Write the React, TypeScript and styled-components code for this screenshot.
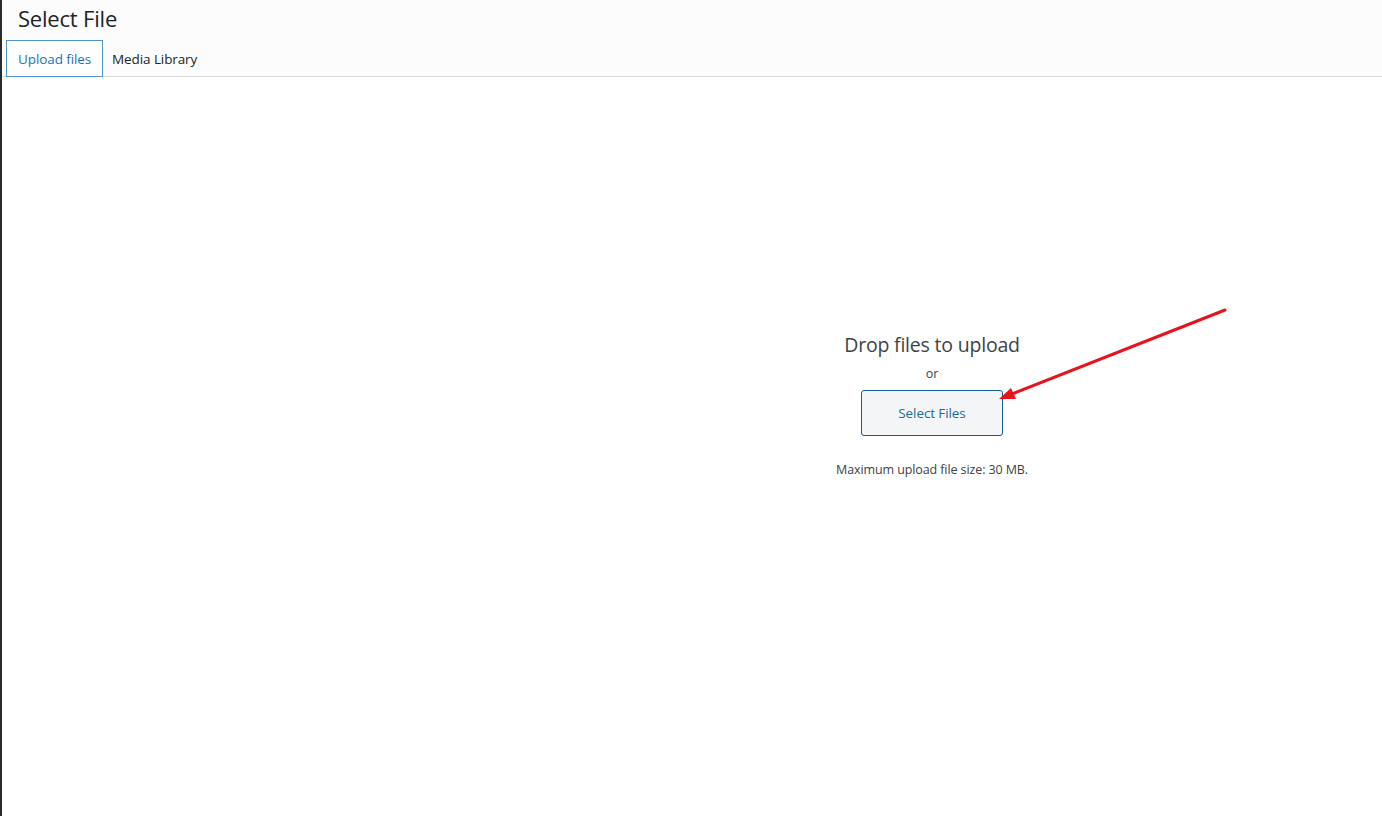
import React, { ReactElement } from 'react';
import styled, { createGlobalStyle } from 'styled-components';

const GlobalStyle = createGlobalStyle`
  html, body {
    margin: 0;
    padding: 0;
    background: #fff;
  }
  body {
    font-family: 'Open Sans', 'Noto Sans', sans-serif;
    color: #1d2327;
  }
`;

const Frame = styled.div`
  position: relative;
  display: flex;
  height: 816px;
  width: 1382px;
  overflow: hidden;
  background: #fff;
`;

const EdgeStrip = styled.div`
  width: 2px;
  flex-shrink: 0;
  background: #2b2b2b;
`;

const Modal = styled.div`
  flex: 1;
  display: flex;
  flex-direction: column;
`;

const Header = styled.div`
  display: flex;
  flex-direction: column;
  background: #fcfcfc;
  border-bottom: 1px solid #dcdcde;
  height: 77px;
  box-sizing: border-box;
`;

const Title = styled.h1`
  margin: 0;
  padding: 4px 0 0 16px;
  height: 38px;
  box-sizing: border-box;
  font-size: 22px;
  font-weight: 400;
  line-height: 28px;
  color: #1d2327;
  letter-spacing: -0.2px;
`;

const TabRow = styled.div`
  display: flex;
  padding: 2px 0 0 4px;
  align-items: stretch;
`;

const Tab = styled.button<{ $active?: boolean }>`
  font-family: 'Open Sans', 'Noto Sans', sans-serif;
  font-size: 13.5px;
  letter-spacing: -0.1px;
  height: 37px;
  margin-bottom: -1px;
  padding: 0 ${(p) => (p.$active ? '11px' : '8px')};
  background: ${(p) => (p.$active ? '#fff' : 'transparent')};
  border: 1px solid ${(p) => (p.$active ? '#4f94d4' : 'transparent')};
  color: ${(p) => (p.$active ? '#2271b1' : '#1d2327')};
  cursor: pointer;
`;

const Content = styled.div`
  flex: 1;
  display: grid;
  grid-template-columns: 480px 1fr;
`;

const Uploader = styled.div`
  grid-column: 2;
  display: flex;
  flex-direction: column;
  align-items: center;
  padding-top: 254px;
`;

const DropText = styled.h2`
  margin: 0;
  font-size: 19.5px;
  font-weight: 400;
  line-height: 28px;
  color: #3c434a;
  letter-spacing: -0.2px;
`;

const OrText = styled.p`
  margin: 6px 0 7px;
  font-size: 12.5px;
  line-height: 18px;
  color: #3c434a;
`;

const SelectButton = styled.button`
  width: 142px;
  height: 46px;
  font-family: 'Open Sans', 'Noto Sans', sans-serif;
  font-size: 13.5px;
  letter-spacing: -0.1px;
  color: #1f6b93;
  background: #f3f5f6;
  border: 1px solid #135e96;
  border-radius: 3px;
  cursor: pointer;
`;

const SizeNote = styled.p`
  margin: 25px 0 0;
  font-size: 12.5px;
  letter-spacing: -0.1px;
  line-height: 18px;
  color: #3c434a;
`;

const Annotation = styled.svg`
  position: absolute;
  left: 0;
  top: 0;
  pointer-events: none;
`;

function App(): ReactElement {
  return (
    <>
      <GlobalStyle />
      <Frame>
        <EdgeStrip />
        <Modal>
          <Header>
            <Title>Select File</Title>
            <TabRow>
              <Tab $active>Upload files</Tab>
              <Tab>Media Library</Tab>
            </TabRow>
          </Header>
          <Content>
            <Uploader>
              <DropText>Drop files to upload</DropText>
              <OrText>or</OrText>
              <SelectButton>Select Files</SelectButton>
              <SizeNote>Maximum upload file size: 30 MB.</SizeNote>
            </Uploader>
          </Content>
        </Modal>
        <Annotation width="1382" height="816" viewBox="0 0 1382 816">
          <line x1="1225" y1="310" x2="1012" y2="394" stroke="#e8131b" strokeWidth="3" strokeLinecap="round" />
          <polygon points="999,399 1011,388 1016,399" fill="#e8131b" />
        </Annotation>
      </Frame>
    </>
  );
}

export default App;
